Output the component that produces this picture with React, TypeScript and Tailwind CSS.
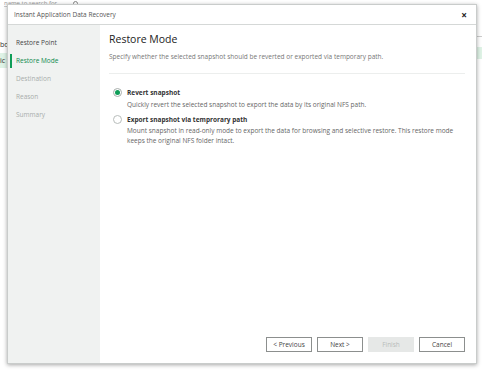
const steps = ["Restore Point", "Restore Mode", "Destination", "Reason", "Summary"];

const options = [
  {
    id: "revert",
    label: "Revert snapshot",
    desc: "Quickly revert the selected snapshot to export the data by its original NFS path.",
  },
  {
    id: "export",
    label: "Export snapshot via temprorary path",
    desc: "Mount snapshot in read-only mode to export the data for browsing and selective restore. This restore mode keeps the original NFS folder intact.",
  },
];

const Radio = ({ checked }: { checked: boolean }) => (
  <span
    className={
      checked
        ? "w-[9px] h-[9px] rounded-full border border-[#a7aeab] bg-white flex items-center justify-center shrink-0"
        : "w-[9px] h-[9px] rounded-full border border-[#b8bdbb] bg-white shrink-0"
    }
  >
    {checked && <span className="w-[5px] h-[5px] rounded-full bg-[#0f9d58]" />}
  </span>
);

const Button = ({ label, disabled }: { label: string; disabled?: boolean }) => (
  <button
    disabled={disabled}
    className={
      disabled
        ? "w-[46px] h-[15px] text-[6.5px] bg-[#e6e8e7] text-[#b8bcba] border border-[#e6e8e7]"
        : "w-[46px] h-[15px] text-[6.5px] bg-white text-[#444] border border-[#8c8f8e]"
    }
  >
    {label}
  </button>
);

export default function App() {
  return (
    <div
      className="relative w-[482px] h-[372px] bg-white overflow-hidden"
      style={{ fontFamily: '"Open Sans", "Noto Sans", sans-serif' }}
    >
      {/* page behind the dialog */}
      <div className="absolute left-[4px] top-0 flex items-center gap-[16px] text-[6px] text-[#999]">
        <span className="border-b border-[#ccc] leading-[6px]">name to search for</span>
        <span className="w-[5px] h-[5px] rounded-full border border-[#888]" />
      </div>
      <div className="absolute left-0 top-[38px] w-[10px] h-[13px] text-[7px] text-[#333] leading-[13px]">bo</div>
      <div className="absolute left-0 top-[53px] w-[10px] h-[15px] bg-[#dff3e6] text-[7px] text-[#333] leading-[15px]">ic</div>
      <div className="absolute right-0 top-[36px] w-[6px] border-t border-[#ccc]" />
      <div className="absolute right-0 top-[47px] w-[6px] h-[12px] bg-[#dff3e6]" />

      {/* dialog */}
      <div className="absolute left-[7px] top-[4px] w-[470px] h-[360px] bg-white border border-[#c9cccb] shadow-[0_1px_4px_rgba(0,0,0,0.35)] flex flex-col">
        <div className="h-[20px] shrink-0 border-b border-[#d5d8d7] flex items-center justify-between pl-[6px] pr-[9px]">
          <span className="text-[6.5px] text-[#555]">Instant Application Data Recovery</span>
          <span className="text-[10px] font-bold text-[#222] leading-none">×</span>
        </div>
        <div className="flex flex-1 min-h-0">
          <div className="w-[92px] shrink-0 bg-[#f0f2f1] pt-[12px] flex flex-col gap-[6px]">
            {steps.map((s, i) => (
              <div key={s} className="flex items-center h-[12px]">
                <span
                  className={
                    i === 1
                      ? "w-[2px] h-[14px] bg-[#0f9d58] ml-[2px] mr-[4px]"
                      : "w-[2px] h-[14px] ml-[2px] mr-[4px]"
                  }
                />
                <span
                  className={
                    i === 0
                      ? "text-[6.5px] text-[#444]"
                      : i === 1
                      ? "text-[6.5px] text-[#0f8a4f] font-medium"
                      : "text-[6.5px] text-[#a8adab]"
                  }
                >
                  {s}
                </span>
              </div>
            ))}
          </div>
          <div className="flex-1 flex flex-col pl-[9px] pr-[11px]">
            <div className="text-[10.5px] text-[#222] mt-[7px] leading-[14px]">Restore Mode</div>
            <div className="text-[6.5px] text-[#777] mt-[6px]">
              Specify whether the selected snapshot should be reverted or exported via temporary path.
            </div>
            <div className="border-t border-[#eceeed] mt-[11px]" />
            <div className="mt-[14px] flex flex-col gap-[5px] pl-[4px]">
              {options.map((o, i) => (
                <div key={o.id}>
                  <div className="flex items-center gap-[5px]">
                    <Radio checked={i === 0} />
                    <span className="text-[6.5px] font-bold text-[#333]">{o.label}</span>
                  </div>
                  <div className="pl-[14px] mt-[2px] text-[6.5px] text-[#666] leading-[10px] max-w-[352px]">
                    {o.desc}
                  </div>
                </div>
              ))}
            </div>
            <div className="flex-1" />
            <div className="flex justify-end gap-[5px] mb-[11px]">
              <Button label="< Previous" />
              <Button label="Next >" />
              <Button label="Finish" disabled />
              <Button label="Cancel" />
            </div>
          </div>
        </div>
      </div>
    </div>
  );
}
